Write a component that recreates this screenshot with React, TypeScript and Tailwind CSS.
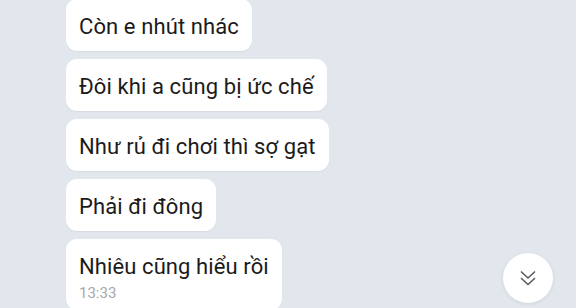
import React from "react";

const msgs = ["Còn e nhút nhác", "Đôi khi a cũng bị ức chế", "Như rủ đi chơi thì sợ gạt", "Phải đi đông"];

export default function App() {
  return (
    <div
      className="relative w-[576px] h-[308px] overflow-hidden bg-[#e2e7ee]"
      style={{ fontFamily: "Roboto, 'Noto Sans', sans-serif" }}
    >
      <div className="flex flex-col items-start gap-[8px] pl-[66px] pt-0 -mt-[1px]">
        {msgs.map((m) => (
          <div
            key={m}
            className="bg-white rounded-[11px] px-[13px] pt-[14px] pb-[10px] text-[22px] leading-[28px] tracking-[0.1px] text-[#1b1b1b] shadow-[0_1px_1px_rgba(0,0,0,0.05)]"
          >
            {m}
          </div>
        ))}
        <div className="bg-white rounded-[11px] px-[13px] pt-[14px] pb-[8px] text-[22px] leading-[28px] tracking-[0.1px] text-[#1b1b1b] shadow-[0_1px_1px_rgba(0,0,0,0.05)]">
          <div>Nhiêu cũng hiểu rồi</div>
          <div className="text-[15px] leading-[18px] mt-[3px] tracking-normal text-[#a5a9ae]">13:33</div>
        </div>
      </div>
      <div className="absolute left-[503px] top-[253px] w-[50px] h-[50px] rounded-full bg-white shadow-[0_1px_4px_rgba(0,0,0,0.08)] flex items-center justify-center">
        <svg width="18" height="18" viewBox="0 0 18 18" fill="none" stroke="#5b5f66" strokeWidth="1.7" strokeLinecap="round" strokeLinejoin="round">
          <path d="M2.5 3 L9 9 L15.5 3" />
          <path d="M2.5 9.5 L9 15.5 L15.5 9.5" />
        </svg>
      </div>
    </div>
  );
}
